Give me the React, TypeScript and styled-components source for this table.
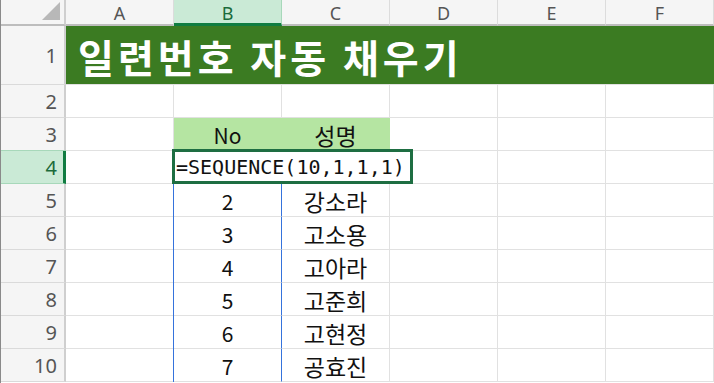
import React from "react";
import styled, { createGlobalStyle, css } from "styled-components";

const GlobalStyle = createGlobalStyle`
  html, body {
    margin: 0;
    padding: 0;
    background: #ffffff;
    overflow: hidden;
  }
`;

const COLUMNS = ["A", "B", "C", "D", "E", "F"];
const GRID = "#e1e1e1";
const ACCENT = "#107c41";
const SPILL = "#3573dc";

const rows: Record<number, { b?: string; c?: string }> = {
  5: { b: "2", c: "강소라" },
  6: { b: "3", c: "고소용" },
  7: { b: "4", c: "고아라" },
  8: { b: "5", c: "고준희" },
  9: { b: "6", c: "고현정" },
  10: { b: "7", c: "공효진" },
};

const Sheet = styled.div`
  display: grid;
  grid-template-columns: 65px repeat(5, 108px) 1fr;
  grid-template-rows: 26px 59px repeat(9, 33px);
  width: 714px;
  height: 383px;
  background: #ffffff;
  border-left: 1px solid #8a8a8a;
  box-sizing: border-box;
  font-family: "Noto Sans", "Noto Sans CJK KR", sans-serif;
`;

const Corner = styled.div`
  position: relative;
  background: #f5f5f5;
  border-right: 2px solid #cfcfcf;
  border-bottom: 2px solid #bdbdbd;
  box-sizing: border-box;

  &::after {
    content: "";
    position: absolute;
    right: 4px;
    bottom: 4px;
    width: 0;
    height: 0;
    border-left: 18px solid transparent;
    border-bottom: 18px solid #b8b8b8;
  }
`;

const ColHead = styled.div<{ $active?: boolean }>`
  display: flex;
  align-items: center;
  justify-content: center;
  background: #f5f5f5;
  color: #555555;
  font-size: 18px;
  border-right: 1px solid #dcdcdc;
  border-bottom: 2px solid #bdbdbd;
  box-sizing: border-box;
  padding-top: 2px;

  ${({ $active }) =>
    $active &&
    css`
      background: #caead6;
      color: #1b6b3b;
      border-right-color: #a7d8ba;
      border-bottom: 3px solid ${ACCENT};
      padding-top: 3px;
    `}
`;

const RowHead = styled.div<{ $active?: boolean }>`
  display: flex;
  align-items: center;
  justify-content: flex-end;
  padding-right: 7px;
  background: #f5f5f5;
  color: #555555;
  font-size: 20px;
  border-right: 2px solid #cfcfcf;
  border-bottom: 1px solid #dadada;
  box-sizing: border-box;

  ${({ $active }) =>
    $active &&
    css`
      background: #caead6;
      color: #1b6b3b;
      border-right: 3px solid ${ACCENT};
      border-bottom-color: #a7d8ba;
      box-shadow: 0 -1px 0 #a7d8ba;
      padding-right: 6px;
    `}
`;

const Cell = styled.div<{ $fill?: string; $spill?: boolean; $hangul?: boolean }>`
  position: relative;
  display: flex;
  align-items: center;
  justify-content: center;
  color: #111111;
  font-size: ${({ $hangul }) => ($hangul ? "23px" : "21px")};
  font-family: "Noto Sans CJK KR", "Noto Sans", sans-serif;
  border-right: 1px solid ${GRID};
  border-bottom: 1px solid ${GRID};
  box-sizing: border-box;
  padding-top: 1px;

  ${({ $fill }) =>
    $fill &&
    css`
      background: ${$fill};
      border-right-color: ${$fill};
    `}

  ${({ $spill }) =>
    $spill &&
    css`
      border-right-color: ${SPILL};
      box-shadow: -1px 0 0 ${SPILL};
    `}
`;

const Title = styled.div`
  grid-column: 2 / span 6;
  display: flex;
  align-items: flex-end;
  padding: 0 0 1px 12px;
  background: #3b7b22;
  color: #ffffff;
  font-family: "Noto Sans CJK KR", sans-serif;
  font-weight: 700;
  font-size: 39px;
  letter-spacing: 4px;
  line-height: 54px;
  white-space: nowrap;
  box-sizing: border-box;
  border-bottom: 1px solid ${GRID};
`;

const EditBox = styled.div`
  position: absolute;
  left: -2px;
  top: -2px;
  height: 35px;
  z-index: 2;
  display: flex;
  align-items: center;
  padding: 0 5px 0 1px;
  background: #ffffff;
  border: 3px solid #1e6e42;
  box-sizing: border-box;
  font-family: "DejaVu Sans Mono", "Liberation Mono", monospace;
  font-size: 20px;
  color: #111111;
  white-space: nowrap;
`;

const HEADER_FILL = "#b5e5a2";

function renderRow(r: number) {
  const cells: React.ReactNode[] = [];
  const data = rows[r];
  COLUMNS.forEach((col) => {
    const key = `${col}${r}`;
    if (r === 3 && (col === "B" || col === "C")) {
      cells.push(
        <Cell key={key} $fill={HEADER_FILL} $hangul={col === "C"}>
          {col === "B" ? "No" : "성명"}
        </Cell>
      );
    } else if (r === 4 && col === "B") {
      cells.push(
        <Cell key={key}>
          <EditBox>=SEQUENCE(10,1,1,1)</EditBox>
        </Cell>
      );
    } else if (data && col === "B") {
      cells.push(
        <Cell key={key} $spill>
          {data.b}
        </Cell>
      );
    } else if (data && col === "C") {
      cells.push(
        <Cell key={key} $hangul>
          {data.c}
        </Cell>
      );
    } else {
      cells.push(<Cell key={key} />);
    }
  });
  return (
    <React.Fragment key={r}>
      <RowHead $active={r === 4}>{r}</RowHead>
      {cells}
    </React.Fragment>
  );
}

export default function App() {
  return (
    <>
      <GlobalStyle />
      <Sheet>
        <Corner />
        {COLUMNS.map((c) => (
          <ColHead key={c} $active={c === "B"}>
            {c}
          </ColHead>
        ))}
        <RowHead>1</RowHead>
        <Title>일련번호 자동 채우기</Title>
        {[2, 3, 4, 5, 6, 7, 8, 9, 10].map(renderRow)}
      </Sheet>
    </>
  );
}
